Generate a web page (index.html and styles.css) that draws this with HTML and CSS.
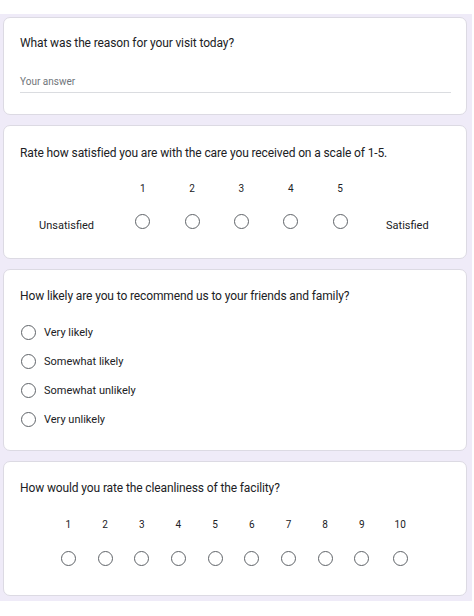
FILE: index.html
```html
<!DOCTYPE html>
<html>
<head>
<meta charset="utf-8">
<link rel="stylesheet" href="styles.css">
</head>
<body>
<div class="page">
  <div class="card card-text">
    <div class="question">What was the reason for your visit today?</div>
    <div class="answer">Your answer</div>
  </div>

  <div class="card card-scale5">
    <div class="question">Rate how satisfied you are with the care you received on a scale of 1-5.</div>
    <div class="scale5">
      <div class="end-label left">Unsatisfied</div>
      <div class="opt"><span class="num">1</span><span class="radio"></span></div>
      <div class="opt"><span class="num">2</span><span class="radio"></span></div>
      <div class="opt"><span class="num">3</span><span class="radio"></span></div>
      <div class="opt"><span class="num">4</span><span class="radio"></span></div>
      <div class="opt"><span class="num">5</span><span class="radio"></span></div>
      <div class="end-label right">Satisfied</div>
    </div>
  </div>

  <div class="card card-choice">
    <div class="question">How likely are you to recommend us to your friends and family?</div>
    <div class="choices">
      <div class="choice"><span class="radio"></span><span class="choice-label">Very likely</span></div>
      <div class="choice"><span class="radio"></span><span class="choice-label">Somewhat likely</span></div>
      <div class="choice"><span class="radio"></span><span class="choice-label">Somewhat unlikely</span></div>
      <div class="choice"><span class="radio"></span><span class="choice-label">Very unlikely</span></div>
    </div>
  </div>

  <div class="card card-scale10">
    <div class="question">How would you rate the cleanliness of the facility?</div>
    <div class="scale10">
      <div class="opt10"><span class="num">1</span><span class="radio"></span></div>
      <div class="opt10"><span class="num">2</span><span class="radio"></span></div>
      <div class="opt10"><span class="num">3</span><span class="radio"></span></div>
      <div class="opt10"><span class="num">4</span><span class="radio"></span></div>
      <div class="opt10"><span class="num">5</span><span class="radio"></span></div>
      <div class="opt10"><span class="num">6</span><span class="radio"></span></div>
      <div class="opt10"><span class="num">7</span><span class="radio"></span></div>
      <div class="opt10"><span class="num">8</span><span class="radio"></span></div>
      <div class="opt10"><span class="num">9</span><span class="radio"></span></div>
      <div class="opt10 last"><span class="num">10</span><span class="radio"></span></div>
    </div>
  </div>
</div>
</body>
</html>
```

FILE: styles.css
```css
* { box-sizing: border-box; }
html, body { margin: 0; padding: 0; background: #ffffff; }
body {
  font-family: Roboto, "Liberation Sans", Arial, sans-serif;
  color: #202124;
  padding-top: 14px;
}
.page {
  background: #efebf8;
  padding: 3px 5px 5px 3px;
  display: flex;
  flex-direction: column;
  gap: 10px;
  width: 472px;
}
.card {
  background: #ffffff;
  border: 1px solid #dcdae3;
  border-radius: 7px;
  padding: 17px 16px 0 16px;
}
.question {
  font-size: 12px;
  line-height: 16px;
  color: #202124;
  letter-spacing: -0.12px;
}
.card-text { height: 98px; }
.answer {
  margin-top: 24px;
  font-size: 10px;
  line-height: 14px;
  color: #70757a;
  padding-bottom: 3px;
  border-bottom: 1px solid #dadce0;
  width: 431px;
}
.card-scale5 { height: 134px; padding-top: 19px; }
.scale5 {
  display: flex;
  margin-top: 21px;
  margin-left: -5px;
}
.end-label {
  font-size: 11px;
  color: #202124;
  text-align: center;
  padding-top: 37px;
  line-height: 14px;
}
.end-label.left { width: 104px; }
.end-label.right { width: 86px; }
.opt {
  width: 49.7px;
  display: flex;
  flex-direction: column;
  align-items: center;
}
.num {
  font-size: 10px;
  line-height: 14px;
  color: #202124;
}
.radio {
  display: block;
  width: 15px;
  height: 15px;
  border: 1.5px solid #5f6368;
  border-radius: 50%;
  flex: none;
}
.opt .radio { margin-top: 18px; }
.card-choice { height: 182px; padding-top: 18px; }
.choices {
  margin-top: 21px;
  display: flex;
  flex-direction: column;
  gap: 14px;
}
.choice {
  display: flex;
  align-items: center;
  gap: 8px;
  margin-left: 1px;
  height: 15px;
}
.choice-label {
  font-size: 11px;
  line-height: 14px;
}
.card-scale10 { height: 135px; padding-top: 18px; }
.scale10 {
  display: flex;
  margin-top: 22px;
  margin-left: 30px;
}
.opt10 {
  width: 36.7px;
  display: flex;
  flex-direction: column;
  align-items: center;
}
.opt10.last { width: 40px; }
.opt10 .radio { margin-top: 19px; }
```
